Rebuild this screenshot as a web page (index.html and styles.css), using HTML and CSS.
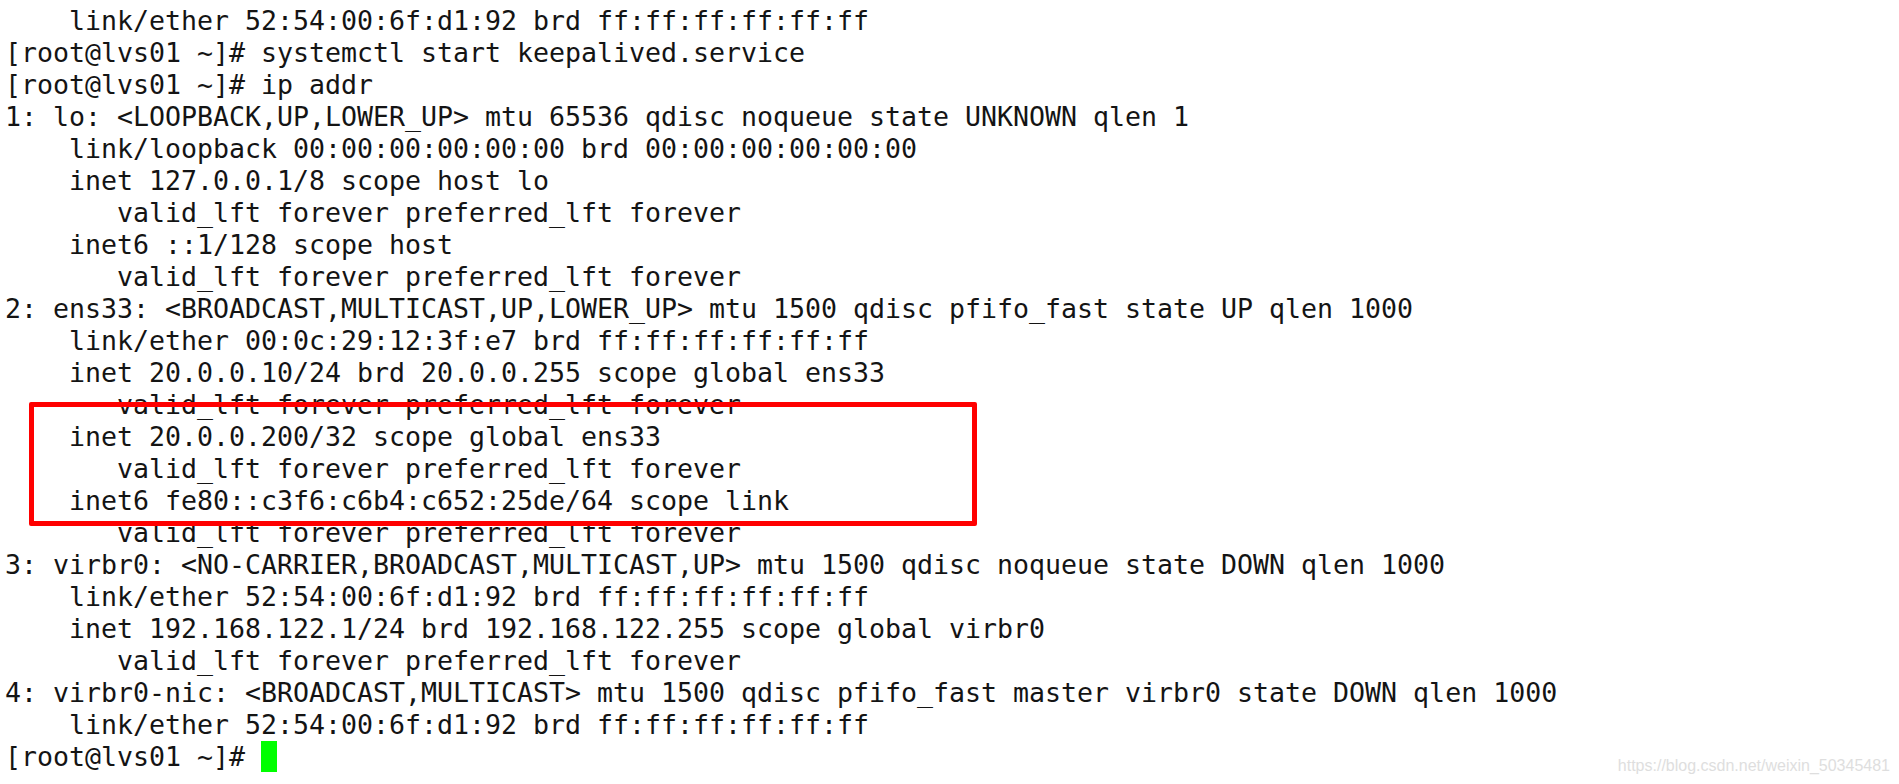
FILE: index.html
```html
<!DOCTYPE html>
<html lang="en">
<head>
<meta charset="utf-8">
<title>ip addr</title>
<link rel="stylesheet" href="styles.css">
</head>
<body>
<div class="screen">
<pre class="term">    link/ether 52:54:00:6f:d1:92 brd ff:ff:ff:ff:ff:ff
[root@lvs01 ~]# systemctl start keepalived.service
[root@lvs01 ~]# ip addr
1: lo: &lt;LOOPBACK,UP,LOWER_UP&gt; mtu 65536 qdisc noqueue state UNKNOWN qlen 1
    link/loopback 00:00:00:00:00:00 brd 00:00:00:00:00:00
    inet 127.0.0.1/8 scope host lo
       valid_lft forever preferred_lft forever
    inet6 ::1/128 scope host
       valid_lft forever preferred_lft forever
2: ens33: &lt;BROADCAST,MULTICAST,UP,LOWER_UP&gt; mtu 1500 qdisc pfifo_fast state UP qlen 1000
    link/ether 00:0c:29:12:3f:e7 brd ff:ff:ff:ff:ff:ff
    inet 20.0.0.10/24 brd 20.0.0.255 scope global ens33
       valid_lft forever preferred_lft forever
    inet 20.0.0.200/32 scope global ens33
       valid_lft forever preferred_lft forever
    inet6 fe80::c3f6:c6b4:c652:25de/64 scope link
       valid_lft forever preferred_lft forever
3: virbr0: &lt;NO-CARRIER,BROADCAST,MULTICAST,UP&gt; mtu 1500 qdisc noqueue state DOWN qlen 1000
    link/ether 52:54:00:6f:d1:92 brd ff:ff:ff:ff:ff:ff
    inet 192.168.122.1/24 brd 192.168.122.255 scope global virbr0
       valid_lft forever preferred_lft forever
4: virbr0-nic: &lt;BROADCAST,MULTICAST&gt; mtu 1500 qdisc pfifo_fast master virbr0 state DOWN qlen 1000
    link/ether 52:54:00:6f:d1:92 brd ff:ff:ff:ff:ff:ff
[root@lvs01 ~]# <span class="cursor"> </span></pre>
<div class="highlight"></div>
<div class="watermark">https://blog.csdn.net/weixin_50345481</div>
</div>
</body>
</html>
```
FILE: styles.css
```css
html, body {
  margin: 0;
  padding: 0;
  background: #ffffff;
}

.screen {
  position: relative;
  width: 1899px;
  height: 784px;
  overflow: hidden;
  background: #ffffff;
}

.term {
  margin: 0;
  padding: 5px 0 0 5px;
  font-family: "DejaVu Sans Mono", monospace;
  font-size: 26.58px;
  line-height: 32px;
  color: #141414;
  white-space: pre;
}

.cursor {
  display: inline-block;
  width: 16px;
  height: 31px;
  background: #00ff00;
  vertical-align: top;
}

.highlight {
  position: absolute;
  left: 29px;
  top: 402px;
  width: 938px;
  height: 114px;
  border: 5px solid #ff0000;
  border-radius: 2px;
}

.watermark {
  position: absolute;
  right: 9px;
  bottom: 9px;
  font-family: "Liberation Sans", Arial, sans-serif;
  font-size: 16px;
  line-height: 18px;
  color: #dedede;
}
```
